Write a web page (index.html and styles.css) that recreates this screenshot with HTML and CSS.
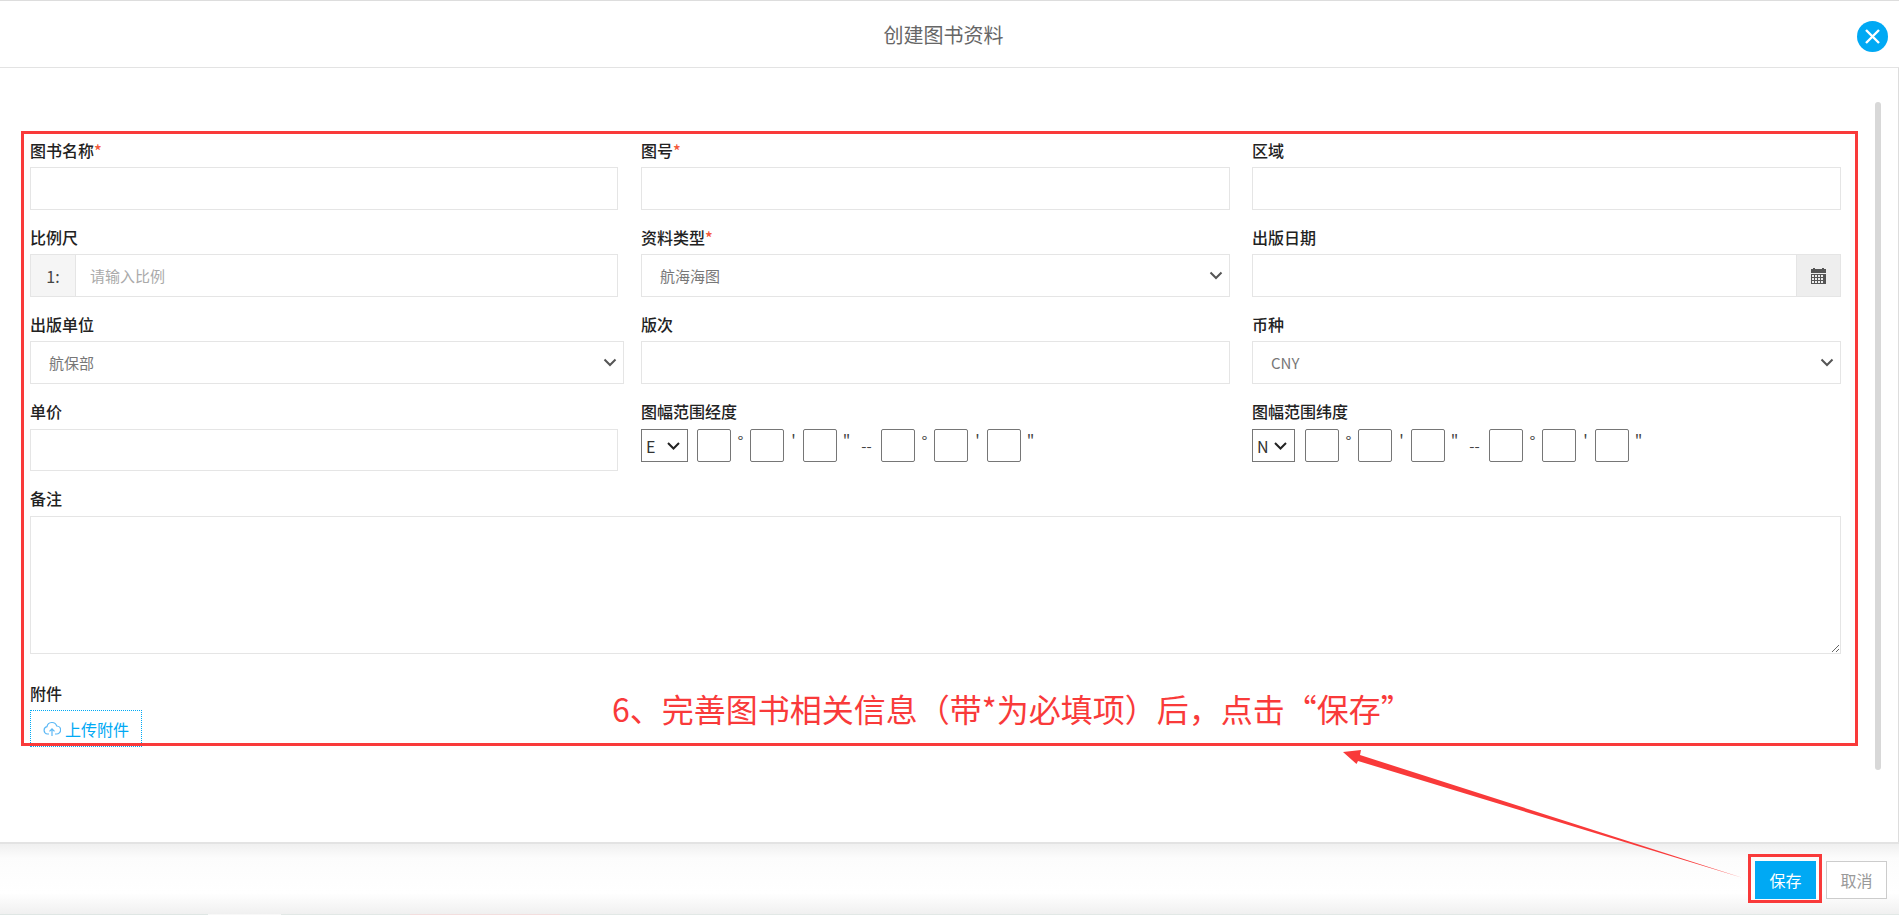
FILE: index.html
```html
<!DOCTYPE html>
<html lang="zh-CN">
<head>
    <meta charset="UTF-8">
    <title>创建图书资料</title>
    <link rel="stylesheet" href="styles.css">
</head>
<body>
<div class="dialog">
    <div class="head">
        <span class="head-title">创建图书资料</span>
        <span class="close">
            <svg width="31" height="31" viewBox="0 0 31 31"><circle cx="15.5" cy="15.5" r="15.5" fill="#00a9f4"/><path d="M9 9l13 13M22 9L9 22" stroke="#fff" stroke-width="2.400" fill="none"/></svg>
        </span>
    </div>
    <div class="body">
        <div class="scroll-bar"></div>
        <form class="form">
            <div class="grid">
                <div class="field">
                    <label class="label">图书名称<i>*</i></label>
                    <input class="input" type="text">
                </div>
                <div class="field">
                    <label class="label">图号<i>*</i></label>
                    <input class="input" type="text">
                </div>
                <div class="field">
                    <label class="label">区域</label>
                    <input class="input" type="text">
                </div>

                <div class="field">
                    <label class="label">比例尺</label>
                    <div class="group">
                        <span class="addon">1:</span>
                        <input class="group-input" type="text" placeholder="请输入比例">
                    </div>
                </div>
                <div class="field">
                    <label class="label">资料类型<i>*</i></label>
                    <div class="select">
                        <span>航海海图</span>
                        <svg width="14" height="9" viewBox="0 0 14 9"><path d="M1.500 1.500L7 7l5.500-5.500" stroke="#555" stroke-width="2" fill="none"/></svg>
                    </div>
                </div>
                <div class="field">
                    <label class="label">出版日期</label>
                    <div class="group">
                        <input class="group-input" type="text">
                        <span class="date-btn">
                            <svg width="15" height="16" viewBox="0 0 15 16"><path d="M2 0h2v1h7V0h2v1h2v4H0V1h2z" fill="#555"/><path d="M0 6h15v10H0zM1 7v2h2V7zm3 0v2h2V7zm3 0v2h2V7zm3 0v2h2V7zM1 10v2h2v-2zm3 0v2h2v-2zm3 0v2h2v-2zm3 0v2h2v-2zM1 13v2h2v-2zm3 0v2h2v-2zm3 0v2h2v-2zm3 0v2h2v-2z" fill="#555" fill-rule="evenodd"/></svg>
                        </span>
                    </div>
                </div>

                <div class="field">
                    <label class="label">出版单位</label>
                    <div class="select select-wide">
                        <span>航保部</span>
                        <svg width="14" height="9" viewBox="0 0 14 9"><path d="M1.500 1.500L7 7l5.500-5.500" stroke="#555" stroke-width="2" fill="none"/></svg>
                    </div>
                </div>
                <div class="field">
                    <label class="label">版次</label>
                    <input class="input" type="text">
                </div>
                <div class="field">
                    <label class="label">币种</label>
                    <div class="select">
                        <span>CNY</span>
                        <svg width="14" height="9" viewBox="0 0 14 9"><path d="M1.500 1.500L7 7l5.500-5.500" stroke="#555" stroke-width="2" fill="none"/></svg>
                    </div>
                </div>

                <div class="field field-last">
                    <label class="label">单价</label>
                    <input class="input" type="text">
                </div>
                <div class="field field-last">
                    <label class="label">图幅范围经度</label>
                    <div class="coord">
                        <div class="dir dir-e"><span>E</span><svg width="13" height="8" viewBox="0 0 13 8"><path d="M1 1l5.500 5.500L12 1" stroke="#222" stroke-width="2" fill="none"/></svg></div>
                        <input class="deg" type="text"><span class="mark">°</span>
                        <input class="deg" type="text"><span class="mark">'</span>
                        <input class="deg" type="text"><span class="mark">"</span>
                        <span class="dash">--</span>
                        <input class="deg" type="text"><span class="mark">°</span>
                        <input class="deg" type="text"><span class="mark">'</span>
                        <input class="deg" type="text"><span class="mark">"</span>
                    </div>
                </div>
                <div class="field field-last">
                    <label class="label">图幅范围纬度</label>
                    <div class="coord">
                        <div class="dir"><span>N</span><svg width="13" height="8" viewBox="0 0 13 8"><path d="M1 1l5.500 5.500L12 1" stroke="#222" stroke-width="2" fill="none"/></svg></div>
                        <input class="deg" type="text"><span class="mark">°</span>
                        <input class="deg" type="text"><span class="mark">'</span>
                        <input class="deg" type="text"><span class="mark">"</span>
                        <span class="dash">--</span>
                        <input class="deg" type="text"><span class="mark">°</span>
                        <input class="deg" type="text"><span class="mark">'</span>
                        <input class="deg" type="text"><span class="mark">"</span>
                    </div>
                </div>
            </div>

            <div class="field-full">
                <label class="label">备注</label>
                <textarea class="textarea"></textarea>
            </div>
            <div class="field-attach">
                <label class="label">附件</label>
                <span class="upload">
                    <svg width="18" height="17" viewBox="0 0 18 17"><path d="M6 14H4.500A3.700 3.700 0 0 1 4 6.700 5 5 0 0 1 13.700 6 3.900 3.900 0 0 1 13.500 14H12M9 16V9M6.500 11.300L9 8.800l2.500 2.500" stroke="#5bb8f5" stroke-width="1.200" fill="none"/></svg>
                    上传附件
                </span>
            </div>
        </form>
    </div>
    <div class="foot">
        <span class="btn btn-save">保存</span>
        <span class="btn btn-cancel">取消</span>
    </div>
    <div class="foot-edge"></div>
</div>

<!-- screenshot annotations on top of the page -->
<div class="mark-form"></div>
<div class="mark-save"></div>
<div class="mark-text">6、完善图书相关信息（带*为必填项）后，点击“保存”</div>
<svg class="mark-arrow" width="1899" height="915" viewBox="0 0 1899 915">
    <path d="M1343 752L1361 750 1360 755 1743 878 1358 761 1356.500 764z" fill="#f93a3a"/>
</svg>
</body>
</html>
```

FILE: styles.css
```css
* {
    margin: 0;
    padding: 0;
    box-sizing: border-box;
}

html, body {
    height: 100%;
    overflow: hidden;
}

body {
    font-family: "Noto Sans CJK SC", "Noto Sans", sans-serif;
    font-size: 15px;
    color: #333;
    background-color: #fff;
}

.dialog {
    height: 915px;
    display: flex;
    flex-direction: column;
    border-top: 1px solid #ddd;
}

.head {
    height: 67px;
    flex-shrink: 0;
    display: flex;
    align-items: center;
    justify-content: center;
    position: relative;
    padding-right: 12px;
    border-bottom: 1px solid #e3e3e3;
}

.head-title {
    font-size: 20px;
    color: #666;
}

.close {
    position: absolute;
    right: 11px;
    top: 20px;
    height: 31px;
}

.body {
    flex: 1;
    position: relative;
    padding: 63px 58px 0 30px;
    border-right: 1px solid #ddd;
}

.scroll-bar {
    position: absolute;
    top: 34px;
    right: 17px;
    width: 6px;
    height: 668px;
    border-radius: 3px;
    background-color: #d8d8d8;
}

.grid {
    display: grid;
    grid-template-columns: repeat(3, 589px);
    column-gap: 22px;
}

.field {
    height: 87px;
}

.field-last .label {
    height: 37px;
}

.field-last .input {
    height: 42px;
}

.label {
    display: block;
    height: 36px;
    line-height: 38px;
    font-size: 16px;
    font-weight: 500;
    color: #222;
}

.label i {
    font-style: normal;
    color: #f4583a;
}

.input,
.group,
.select,
.textarea {
    display: flex;
    width: 589px;
    height: 43px;
    border: 1px solid #e5e5e5;
    background-color: #fff;
    outline: none;
}

/* first column is one pixel narrower */
.field:nth-child(3n+1) .input,
.field:nth-child(3n+1) .group {
    width: 588px;
}

.group-input {
    flex: 1;
    min-width: 0;
    height: 41px;
    border: none;
    outline: none;
    padding-left: 14px;
    font: inherit;
}

.group-input::placeholder {
    color: #aaa;
}

.addon {
    width: 45px;
    display: flex;
    align-items: center;
    justify-content: center;
    background-color: #f5f5f5;
    border-right: 1px solid #e5e5e5;
    font-size: 16px;
    color: #444;
}

.date-btn {
    width: 44px;
    display: flex;
    align-items: center;
    justify-content: center;
    background-color: #eee;
    border-left: 1px solid #e5e5e5;
}

.select {
    align-items: center;
    justify-content: space-between;
    padding: 0 6px 0 18px;
    color: #777;
}

.select-wide {
    width: 594px;
}

.coord {
    display: flex;
    align-items: center;
    height: 33px;
}

.dir {
    width: 43px;
    height: 33px;
    display: flex;
    align-items: center;
    justify-content: space-between;
    padding: 0 7px 0 4px;
    border: 1px solid #767676;
    font-size: 16px;
    color: #333;
    margin-right: 10px;
}

.dir-e {
    width: 47px;
    margin-right: 9px;
}

.deg {
    width: 34px;
    height: 33px;
    border: 1px solid #767676;
    border-radius: 2px;
    outline: none;
}

.mark {
    width: 19px;
    text-align: center;
    font-size: 16px;
    line-height: 33px;
    height: 33px;
    margin-top: -8px;
    color: #444;
}

.dash {
    width: 25px;
    padding-right: 4px;
    text-align: center;
    font-size: 15px;
    color: #444;
}

.field-full {
    height: 176px;
}

.field-full .label {
    height: 37px;
}

.textarea {
    width: 1811px;
    height: 138px;
    resize: both;
}

.field-attach {
    margin-top: 19px;
}

.upload {
    display: flex;
    align-items: center;
    justify-content: center;
    gap: 4px;
    width: 112px;
    height: 37px;
    border: 1px dotted #00a9f4;
    font-size: 16px;
    color: #00a9f4;
}

.foot {
    height: 72px;
    flex-shrink: 0;
    display: flex;
    justify-content: flex-end;
    gap: 10px;
    padding: 17px 12px 0 0;
    border-top: 2px solid #e3e3e3;
    background: linear-gradient(#f0f0f0, #fcfcfc 20%, #fff 70%, #f0f0f0);
}

/* edge of the page behind the dialog */
.foot-edge {
    height: 1px;
    flex-shrink: 0;
    background: linear-gradient(90deg, #dfe6e4 208px, #f8f8f8 208px, #f8f8f8 281px, #e2e8e6 281px, #e2e8e6 410px, #f3dede 410px, #f3dede 560px, #e2e8e6 560px);
}

.btn {
    width: 61px;
    height: 38px;
    display: flex;
    align-items: center;
    justify-content: center;
    font-size: 16px;
}

.btn-save {
    background-color: #00a9f4;
    color: #fff;
}

.btn-cancel {
    background-color: #fff;
    border: 1px solid #ccc;
    color: #999;
}

.mark-form {
    position: absolute;
    left: 21px;
    top: 131px;
    width: 1837px;
    height: 615px;
    border: 3px solid #f93a3a;
}

.mark-save {
    position: absolute;
    left: 1748px;
    top: 854px;
    width: 74px;
    height: 49px;
    border: 3px solid #f93a3a;
}

.mark-text {
    position: absolute;
    left: 612px;
    top: 685px;
    font-size: 32px;
    line-height: 46px;
    white-space: nowrap;
    color: #f93a3a;
}

.mark-arrow {
    position: absolute;
    left: 0;
    top: 0;
}
```
